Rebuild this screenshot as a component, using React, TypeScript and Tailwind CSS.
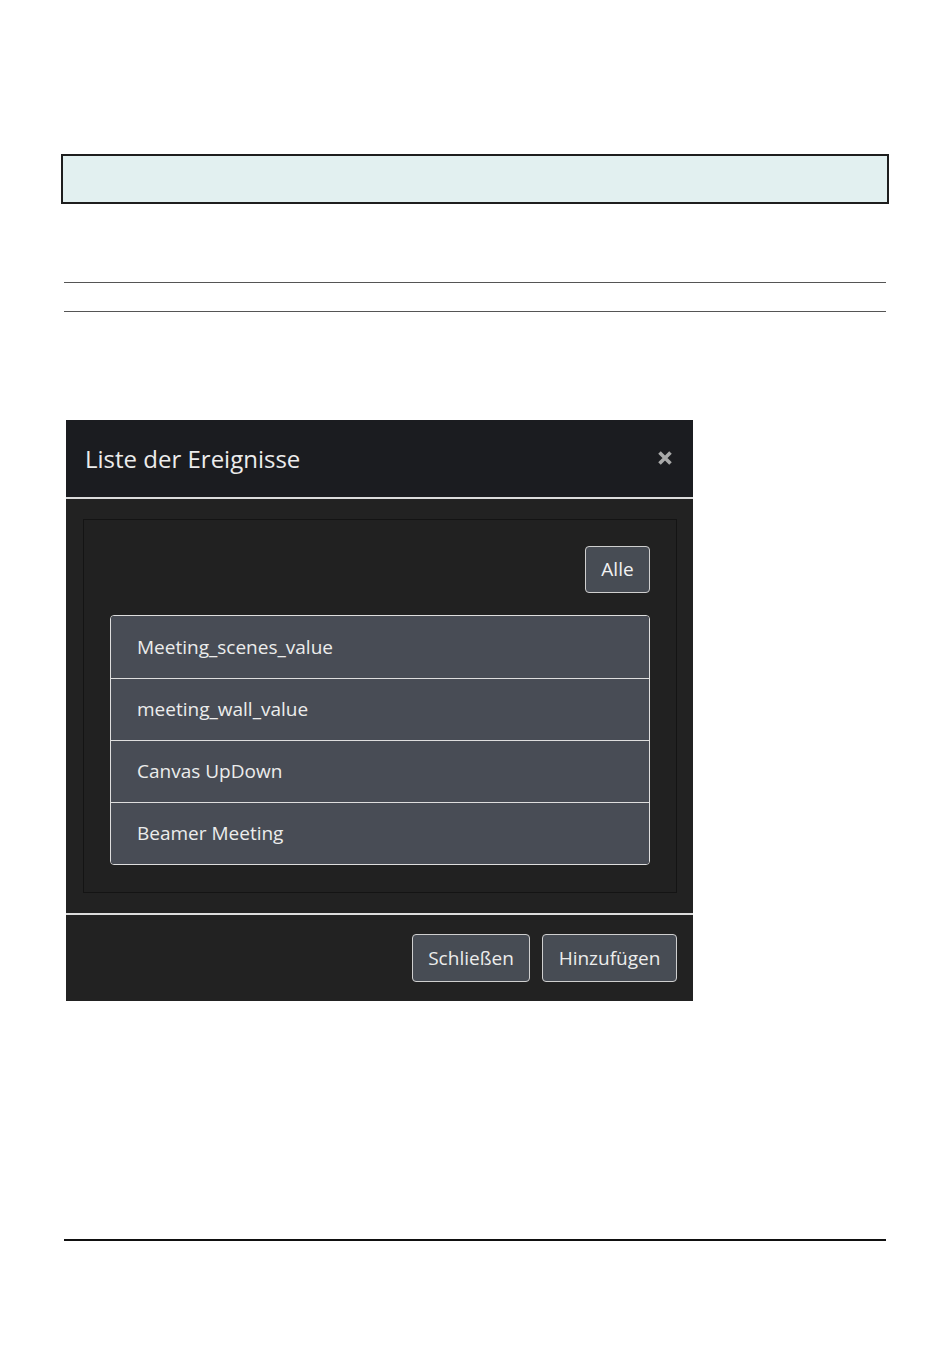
import React from 'react';

const EVENTS = ['Meeting_scenes_value', 'meeting_wall_value', 'Canvas UpDown', 'Beamer Meeting'];

const font = { fontFamily: '"Open Sans", "Noto Sans", sans-serif' };

const App: React.FC = () => {
  return (
    <div className="min-h-[1369px] bg-white pt-[154px]" style={font}>
      {/* info box */}
      <div className="mx-[61px] h-[50px] border-2 border-[#1e1e1e] bg-[#e2f0f0]" />

      <div className="mx-[64px] mt-[78px] border-t border-[#555]" />
      <div className="mx-[64px] mt-[28px] border-t border-[#555]" />

      {/* dialog screenshot */}
      <div className="ml-[66px] mt-[108px] w-[627px] bg-[#222]">
        <div className="flex h-[77px] items-center justify-between bg-[#1b1c20] pl-[19px] pr-[20px]">
          <h2 className="text-[24px] font-normal text-[#ececec]">Liste der Ereignisse</h2>
          <svg width="16" height="16" viewBox="0 0 16 16" className="mt-[-2px]">
            <path d="M2.5 2.5l11 11M13.5 2.5l-11 11" stroke="#a9a9a9" strokeWidth="3.6" strokeLinecap="butt" />
          </svg>
        </div>
        <div className="h-[2px] bg-[#dcdcdc]" />

        <div className="pb-[20px] pl-[17px] pr-[16px] pt-[20px]">
          <div className="border border-[#141414] bg-[#212121] px-[26px] pb-[27px] pt-[26px]">
            <div className="flex justify-end">
              <button className="h-[47px] w-[65px] rounded-[4px] border border-[#cfcfcf] bg-[#474c54] text-[19px] text-[#f2f2f2]">
                Alle
              </button>
            </div>
            <ul className="mt-[22px] overflow-hidden rounded-[4px] border border-[#dedede]">
              {EVENTS.map((ev, i) => (
                <li
                  key={ev}
                  className={`flex h-[62px] items-center bg-[#484c55] px-[26px] text-[19px] text-[#ececec] ${i > 0 ? 'border-t border-[#dedede]' : ''}`}
                >
                  {ev}
                </li>
              ))}
            </ul>
          </div>
        </div>

        <div className="h-[2px] bg-[#dcdcdc]" />
        <div className="flex h-[86px] items-center justify-end gap-[12px] pr-[16px]">
          <button className="h-[48px] w-[118px] rounded-[4px] border border-[#cfcfcf] bg-[#474c54] text-[19px] text-[#ececec]">
            Schließen
          </button>
          <button className="h-[48px] w-[135px] rounded-[4px] border border-[#cfcfcf] bg-[#474c54] text-[19px] text-[#ececec]">
            Hinzufügen
          </button>
        </div>
      </div>

      <div className="mx-[64px] mt-[238px] border-t-2 border-[#111]" />
    </div>
  );
};

export default App;
